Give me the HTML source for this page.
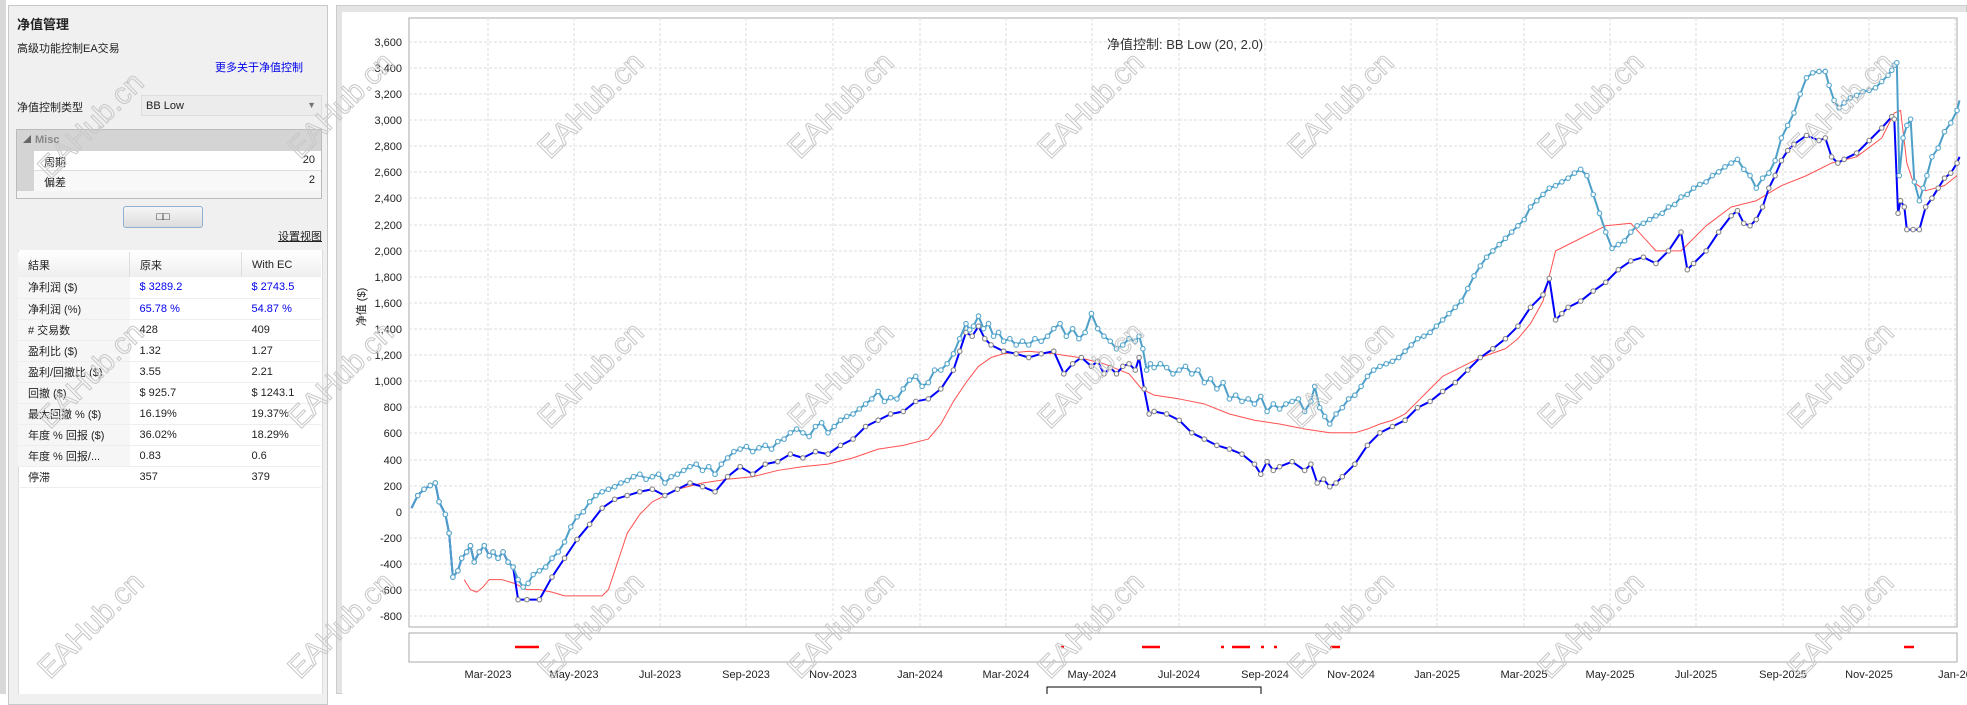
<!DOCTYPE html>
<html><head><meta charset="utf-8"><style>
body{margin:0;width:1967px;height:694px;overflow:hidden;background:#fff;font-family:"Liberation Sans","Noto Sans CJK SC",sans-serif;font-size:11px;color:#222;position:relative}
.abs{position:absolute}
#lp{left:8px;top:5px;width:320px;height:700px;background:#f0f0f0;border:1px solid #c8c8c8;box-sizing:border-box}
table{border-collapse:collapse}
</style></head><body>
<div class="abs" style="left:0;top:0;width:6px;height:694px;background:#d8d8d8"></div>
<div id="lp" class="abs"></div>
<div class="abs" style="left:17px;top:14px;font-size:13px;font-weight:bold">净值管理</div>
<div class="abs" style="left:17px;top:40px">高级功能控制EA交易</div>
<div class="abs" style="left:215px;top:59px;color:#0000ee">更多关于净值控制</div>
<div class="abs" style="left:17px;top:99px">净值控制类型</div>
<div class="abs" style="left:141px;top:95px;width:181px;height:21px;background:#ececec;border:1px solid #ddd;box-sizing:border-box"><span class="abs" style="left:4px;top:4px">BB Low</span><span class="abs" style="right:5px;top:4px;color:#777;font-size:9px">▼</span></div>
<div class="abs" style="left:16px;top:129px;width:306px;height:70px;border:1px solid #bbb;box-sizing:border-box;background:#f4f4f4">
<div class="abs" style="left:0;top:0;width:304px;height:21px;background:#d4d4d4"><span class="abs" style="left:6px;top:4px;font-size:8px;color:#666">◢</span><span class="abs" style="left:18px;top:4px;color:#888;font-weight:bold">Misc</span></div>
<div class="abs" style="left:0;top:21px;width:17px;height:40px;background:#d4d4d4"></div>
<div class="abs" style="left:17px;top:21px;width:287px;height:19px;background:#fff;border-bottom:1px solid #ddd"><span class="abs" style="left:10px;top:3px">周期</span><span class="abs" style="right:6px;top:3px">20</span></div>
<div class="abs" style="left:17px;top:41px;width:287px;height:20px;background:#f8f8f8"><span class="abs" style="left:10px;top:3px">偏差</span><span class="abs" style="right:6px;top:3px">2</span></div>
</div>
<div class="abs" style="left:123px;top:206px;width:80px;height:22px;border:1px solid #8fb0d0;border-radius:3px;background:linear-gradient(#f6f6f6,#dcdcdc);box-sizing:border-box;text-align:center;line-height:20px">□□</div>
<div class="abs" style="left:278px;top:228px;text-decoration:underline">设置视图</div>
<div class="abs" style="left:18px;top:250px;width:303px;height:444px;background:#fff;border-left:1px solid #ddd;border-right:1px solid #ddd"></div>
<table class="abs" style="left:18px;top:252px;width:303px;font-size:11px">
<tr style="height:25px;background:linear-gradient(#fff,#eee)"><td style="width:100px;padding-left:10px;border-right:1px solid #ddd">結果</td><td style="width:100px;padding-left:10px;border-right:1px solid #ddd">原来</td><td style="padding-left:10px">With EC</td></tr>
<tr style="height:21px;border-bottom:1px solid #eee"><td style="padding-left:10px;background:#f6f6f6">净利润 ($)</td><td style="padding-left:10px;color:#0000ee">$ 3289.2</td><td style="padding-left:10px;color:#0000ee">$ 2743.5</td></tr>
<tr style="height:21px;border-bottom:1px solid #eee"><td style="padding-left:10px;background:#f6f6f6">净利润 (%)</td><td style="padding-left:10px;color:#0000ee">65.78 %</td><td style="padding-left:10px;color:#0000ee">54.87 %</td></tr>
<tr style="height:21px;border-bottom:1px solid #eee"><td style="padding-left:10px;background:#f6f6f6"># 交易数</td><td style="padding-left:10px">428</td><td style="padding-left:10px">409</td></tr>
<tr style="height:21px;border-bottom:1px solid #eee"><td style="padding-left:10px;background:#f6f6f6">盈利比 ($)</td><td style="padding-left:10px">1.32</td><td style="padding-left:10px">1.27</td></tr>
<tr style="height:21px;border-bottom:1px solid #eee"><td style="padding-left:10px;background:#f6f6f6">盈利/回撤比 ($)</td><td style="padding-left:10px">3.55</td><td style="padding-left:10px">2.21</td></tr>
<tr style="height:21px;border-bottom:1px solid #eee"><td style="padding-left:10px;background:#f6f6f6">回撤 ($)</td><td style="padding-left:10px">$ 925.7</td><td style="padding-left:10px">$ 1243.1</td></tr>
<tr style="height:21px;border-bottom:1px solid #eee"><td style="padding-left:10px;background:#f6f6f6">最大回撤 % ($)</td><td style="padding-left:10px">16.19%</td><td style="padding-left:10px">19.37%</td></tr>
<tr style="height:21px;border-bottom:1px solid #eee"><td style="padding-left:10px;background:#f6f6f6">年度 % 回报 ($)</td><td style="padding-left:10px">36.02%</td><td style="padding-left:10px">18.29%</td></tr>
<tr style="height:21px;border-bottom:1px solid #eee"><td style="padding-left:10px;background:#f6f6f6">年度 % 回报/...</td><td style="padding-left:10px">0.83</td><td style="padding-left:10px">0.6</td></tr>
<tr style="height:21px;border-bottom:1px solid #eee"><td style="padding-left:10px">停滞</td><td style="padding-left:10px">357</td><td style="padding-left:10px">379</td></tr>
</table>
<div class="abs" style="left:336px;top:5px;width:1631px;height:689px;background:#e4e4e4;border:1px solid #ccc;box-sizing:border-box"></div>
<div class="abs" style="left:342px;top:12px;width:1625px;height:682px;background:#fff"></div>
<svg class="abs" style="left:0;top:0" width="1967" height="694" font-family="Liberation Sans, Noto Sans CJK SC, sans-serif">
<defs><marker id="m" markerUnits="userSpaceOnUse" markerWidth="6" markerHeight="6" refX="3" refY="3"><circle cx="3" cy="3" r="1.8" fill="#fff" stroke="#888" stroke-width="0.9"/></marker>
<marker id="m2" markerUnits="userSpaceOnUse" markerWidth="6" markerHeight="6" refX="3" refY="3"><circle cx="3" cy="3" r="1.8" fill="#fff" stroke="#5aa8cc" stroke-width="0.9"/></marker></defs>
<rect x="409" y="18" width="1548" height="609" fill="#fff" stroke="#aaa"/>
<g stroke="#ddd" stroke-dasharray="3,2" stroke-width="1">
<path d="M409 42H1957M409 68H1957M409 94H1957M409 120H1957M409 146H1957M409 172H1957M409 198H1957M409 225H1957M409 251H1957M409 277H1957M409 303H1957M409 329H1957M409 355H1957M409 381H1957M409 407H1957M409 433H1957M409 460H1957M409 486H1957M409 512H1957M409 538H1957M409 564H1957M409 590H1957M409 616H1957"/>
<path d="M488 18V627M574 18V627M660 18V627M746 18V627M833 18V627M920 18V627M1006 18V627M1092 18V627M1179 18V627M1265 18V627M1351 18V627M1437 18V627M1524 18V627M1610 18V627M1696 18V627M1783 18V627M1869 18V627M1955 18V627"/>
</g>
<g font-size="11" text-anchor="end" fill="#222">
<text x="402" y="46">3,600</text><text x="402" y="72">3,400</text><text x="402" y="98">3,200</text><text x="402" y="124">3,000</text><text x="402" y="150">2,800</text><text x="402" y="176">2,600</text><text x="402" y="202">2,400</text><text x="402" y="229">2,200</text><text x="402" y="255">2,000</text><text x="402" y="281">1,800</text><text x="402" y="307">1,600</text><text x="402" y="333">1,400</text><text x="402" y="359">1,200</text><text x="402" y="385">1,000</text><text x="402" y="411">800</text><text x="402" y="437">600</text><text x="402" y="464">400</text><text x="402" y="490">200</text><text x="402" y="516">0</text><text x="402" y="542">-200</text><text x="402" y="568">-400</text><text x="402" y="594">-600</text><text x="402" y="620">-800</text>
</g>
<text x="1185" y="49" font-size="13" text-anchor="middle" fill="#333">净值控制: BB Low (20, 2.0)</text>
<text transform="translate(365,307) rotate(-90)" font-size="11" text-anchor="middle" fill="#222">净值 ($)</text>
<rect x="409" y="633" width="1548" height="29" fill="#fff" stroke="#aaa"/>
<g stroke="#f00" stroke-width="2.5"><path d="M515 647H539M1061 647H1064M1142 647H1160M1221 647H1224M1232 647H1250M1261 647H1264M1274 647H1277M1330 647H1340M1904 647H1914"/></g>
<g font-size="11" text-anchor="middle" fill="#222">
<text x="488" y="678">Mar-2023</text><text x="574" y="678">May-2023</text><text x="660" y="678">Jul-2023</text><text x="746" y="678">Sep-2023</text><text x="833" y="678">Nov-2023</text><text x="920" y="678">Jan-2024</text><text x="1006" y="678">Mar-2024</text><text x="1092" y="678">May-2024</text><text x="1179" y="678">Jul-2024</text><text x="1265" y="678">Sep-2024</text><text x="1351" y="678">Nov-2024</text><text x="1437" y="678">Jan-2025</text><text x="1524" y="678">Mar-2025</text><text x="1610" y="678">May-2025</text><text x="1696" y="678">Jul-2025</text><text x="1783" y="678">Sep-2025</text><text x="1869" y="678">Nov-2025</text><text x="1955" y="678">Jan-20</text>
</g>
<rect x="1047" y="687" width="214" height="20" fill="#fff" stroke="#000"/>
<g transform="scale(1.2545)" fill="none" stroke-linejoin="round">
<polyline stroke="#ff5050" stroke-width="0.8" points="370,462 375,470 380,472 385,468 390,462 400,462 410,465 420,470 430,470 440,472 450,475 460,475 470,475 480,475 485,470 490,455 495,440 500,425 510,410 520,400 530,395 540,390 560,385 580,382 600,380 620,375 640,372 660,370 680,365 700,358 720,355 740,350 750,338 760,320 770,305 780,292 790,285 800,282 820,280 840,282 860,285 880,290 900,298 910,310 920,315 940,318 960,322 980,330 1000,335 1020,338 1040,342 1060,345 1080,345 1090,342 1100,338 1110,335 1120,330 1130,320 1140,310 1150,300 1160,295 1180,285 1200,278 1210,270 1220,258 1230,240 1240,200 1250,195 1270,185 1280,180 1300,178 1320,200 1340,200 1345,195 1360,180 1380,165 1400,160 1420,148 1440,140 1460,130 1480,125 1500,110 1510,90 1515,88 1520,130 1525,145 1535,152 1550,148 1560,140"/>
<polyline stroke="#0000ff" stroke-width="1.6" marker-mid="url(#m)" points="328,405 333,395 338,390 343,387 347,385 350,400 355,410 358,425 361,460 365,455 368,445 372,440 375,435 378,448 382,440 386,435 390,443 393,440 397,445 401,440 405,448 409,452 413,478 420,478 430,478 440,460 450,445 460,430 470,418 480,405 490,398 500,395 510,392 520,390 530,395 540,390 550,385 560,388 570,392 580,380 590,372 600,378 610,370 620,368 630,362 640,365 650,360 660,362 670,355 680,350 690,340 700,335 710,330 720,328 730,320 740,318 750,310 760,295 765,280 770,265 775,268 780,260 785,270 790,275 800,280 810,282 820,285 830,282 840,280 848,298 855,290 862,285 870,292 875,288 880,298 885,293 890,298 895,292 900,290 905,295 908,285 912,310 916,330 920,328 930,330 940,335 950,345 960,350 970,355 980,358 990,362 1000,370 1005,378 1010,368 1015,375 1020,372 1030,368 1040,375 1045,370 1050,385 1055,382 1060,388 1065,385 1070,380 1080,370 1090,355 1100,345 1110,340 1120,335 1130,325 1140,320 1150,312 1160,305 1170,295 1180,285 1190,278 1200,270 1210,260 1220,245 1230,235 1235,222 1240,255 1245,250 1250,245 1260,240 1270,232 1280,225 1290,215 1300,208 1310,205 1320,210 1330,200 1340,185 1345,215 1350,210 1360,200 1370,185 1380,172 1385,168 1390,178 1395,180 1400,175 1405,165 1410,150 1415,140 1420,128 1425,120 1430,115 1440,108 1450,112 1455,110 1460,125 1465,130 1470,127 1480,122 1490,112 1500,102 1508,93 1510,95 1513,170 1515,160 1518,165 1520,183 1525,183 1530,183 1535,165 1540,158 1545,150 1550,142 1555,138 1560,130 1562,125"/>
<polyline stroke="#4ea0c8" stroke-width="1.6" marker-mid="url(#m2)" points="328,405 333,395 338,390 343,387 347,385 350,400 355,410 358,425 361,460 365,455 368,445 372,440 375,435 378,448 382,440 386,435 390,443 393,440 397,445 401,440 405,448 409,452 413,462 417,468 421,465 425,458 430,455 435,452 440,445 445,440 450,432 455,420 460,412 465,408 470,400 475,395 480,392 485,390 490,388 495,385 500,383 505,380 510,378 515,382 520,380 525,378 530,385 535,380 540,378 545,375 550,372 555,370 560,375 565,372 570,378 575,370 580,365 585,360 590,358 595,356 600,360 605,357 610,355 615,358 620,352 625,350 630,345 635,342 640,345 645,348 650,340 655,337 660,345 665,340 670,335 675,332 680,330 685,326 690,322 695,318 700,312 705,320 710,317 715,318 720,310 725,303 730,300 735,308 740,305 745,295 750,295 755,290 760,282 765,270 770,258 773,263 776,260 780,252 784,262 788,258 792,268 796,265 800,272 805,270 810,275 815,272 820,275 825,270 830,272 835,268 840,262 845,258 850,268 855,262 860,270 865,265 870,250 875,262 880,268 885,272 890,278 895,275 900,270 905,272 908,268 911,278 914,295 917,290 920,293 925,290 930,293 935,298 940,295 945,292 950,298 955,295 960,305 965,302 970,310 975,305 980,318 985,315 990,320 995,318 1000,322 1005,316 1010,328 1015,322 1020,326 1025,322 1030,320 1035,318 1040,328 1045,320 1048,308 1052,325 1056,332 1060,338 1065,330 1070,325 1075,318 1080,315 1085,308 1090,300 1095,295 1100,292 1105,290 1110,288 1115,285 1120,280 1125,275 1130,270 1135,268 1140,265 1145,260 1150,255 1155,250 1160,245 1165,240 1170,230 1175,220 1180,212 1185,205 1190,200 1195,195 1200,190 1205,185 1210,180 1215,175 1220,165 1225,160 1230,155 1235,150 1240,148 1245,145 1250,142 1255,138 1260,135 1265,140 1270,155 1275,170 1280,185 1285,198 1290,195 1295,192 1300,185 1305,180 1310,178 1315,175 1320,172 1325,170 1330,165 1335,163 1340,157 1345,155 1350,150 1355,147 1360,145 1365,140 1370,137 1375,133 1380,130 1385,127 1390,135 1395,140 1400,150 1405,142 1410,138 1415,128 1420,110 1425,100 1430,90 1435,75 1440,62 1445,58 1450,57 1455,57 1458,68 1462,80 1466,86 1470,82 1475,78 1480,76 1485,73 1490,72 1495,70 1500,65 1505,60 1508,56 1510,52 1512,50 1514,140 1517,110 1520,100 1523,95 1526,145 1530,160 1533,150 1536,140 1540,125 1545,118 1550,105 1555,98 1560,88 1562,80"/>
</g>
<g fill="none" stroke="#c8c8c8" stroke-width="1" font-size="30" font-family="Liberation Sans, sans-serif">
<text transform="translate(50,180) rotate(-45)">EAHub.cn</text>
<text transform="translate(300,160) rotate(-45)">EAHub.cn</text>
<text transform="translate(550,160) rotate(-45)">EAHub.cn</text>
<text transform="translate(800,160) rotate(-45)">EAHub.cn</text>
<text transform="translate(1050,160) rotate(-45)">EAHub.cn</text>
<text transform="translate(1300,160) rotate(-45)">EAHub.cn</text>
<text transform="translate(1550,160) rotate(-45)">EAHub.cn</text>
<text transform="translate(1800,160) rotate(-45)">EAHub.cn</text>
<text transform="translate(50,430) rotate(-45)">EAHub.cn</text>
<text transform="translate(300,430) rotate(-45)">EAHub.cn</text>
<text transform="translate(550,430) rotate(-45)">EAHub.cn</text>
<text transform="translate(800,430) rotate(-45)">EAHub.cn</text>
<text transform="translate(1050,430) rotate(-45)">EAHub.cn</text>
<text transform="translate(1300,430) rotate(-45)">EAHub.cn</text>
<text transform="translate(1550,430) rotate(-45)">EAHub.cn</text>
<text transform="translate(1800,430) rotate(-45)">EAHub.cn</text>
<text transform="translate(50,680) rotate(-45)">EAHub.cn</text>
<text transform="translate(300,680) rotate(-45)">EAHub.cn</text>
<text transform="translate(550,680) rotate(-45)">EAHub.cn</text>
<text transform="translate(800,680) rotate(-45)">EAHub.cn</text>
<text transform="translate(1050,680) rotate(-45)">EAHub.cn</text>
<text transform="translate(1300,680) rotate(-45)">EAHub.cn</text>
<text transform="translate(1550,680) rotate(-45)">EAHub.cn</text>
<text transform="translate(1800,680) rotate(-45)">EAHub.cn</text>
</g>
</svg>
</body></html>
